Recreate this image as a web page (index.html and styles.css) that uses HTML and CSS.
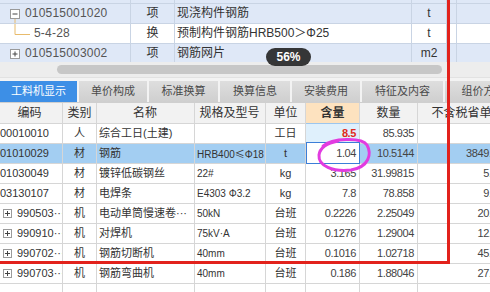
FILE: index.html
```html
<!DOCTYPE html>
<html>
<head>
<title>工料机显示</title>
<link rel="stylesheet" href="styles.css">
</head>
<body>
<div class="screen">

  <div class="upper">
    <div class="urow blue stub">
      <div class="uc code"></div><div class="uc kind"></div><div class="uc name"></div><div class="uc unit"></div><div class="uc gap"></div><div class="uc rest"></div>
    </div>
    <div class="urow blue">
      <div class="uc code">
        <svg class="tree" width="24" height="20" viewBox="0 0 24 20"><rect x="10.5" y="5.5" width="9" height="9" fill="#fff" stroke="#9a9a9a"/><line x1="12.5" y1="10" x2="17.5" y2="10" stroke="#444"/><line x1="15" y1="15" x2="15" y2="20" stroke="#e8bb6c"/></svg>
        <span class="ctext">010515001020</span>
      </div>
      <div class="uc kind">项</div>
      <div class="uc name">现浇构件钢筋</div>
      <div class="uc unit">t</div>
      <div class="uc gap"></div><div class="uc rest"></div>
    </div>
    <div class="urow">
      <div class="uc code">
        <svg class="tree sub" width="33" height="20" viewBox="0 0 33 20"><line x1="15" y1="0" x2="15" y2="10.5" stroke="#e8bb6c"/><line x1="15" y1="10.5" x2="30" y2="10.5" stroke="#e8bb6c"/></svg>
        <span class="ctext">5-4-28</span>
      </div>
      <div class="uc kind">换</div>
      <div class="uc name">预制构件钢筋HRB500＞Φ25</div>
      <div class="uc unit">t</div>
      <div class="uc gap"></div><div class="uc rest"></div>
    </div>
    <div class="urow blue">
      <div class="uc code">
        <svg class="tree" width="24" height="20" viewBox="0 0 24 20"><rect x="10.5" y="5.5" width="9" height="9" fill="#fff" stroke="#9a9a9a"/><line x1="12.5" y1="10" x2="17.5" y2="10" stroke="#444"/><line x1="15" y1="7.5" x2="15" y2="12.5" stroke="#444"/></svg>
        <span class="ctext">010515003002</span>
      </div>
      <div class="uc kind">项</div>
      <div class="uc name">钢筋网片</div>
      <div class="uc unit">m2</div>
      <div class="uc gap"></div><div class="uc rest"></div>
    </div>
  </div>

  <div class="hscroll"><div class="thumb"></div></div>

  <div class="tabs">
    <div class="tab active">工料机显示</div>
    <div class="tab w68">单价构成</div>
    <div class="tab w69">标准换算</div>
    <div class="tab w70">换算信息</div>
    <div class="tab w68">安装费用</div>
    <div class="tab w81">特征及内容</div>
    <div class="tab">组价方案</div>
  </div>

  <div class="grid">
    <div class="grow head">
      <div class="gc c-code">编码</div>
      <div class="gc c-type">类别</div>
      <div class="gc c-name center">名称</div>
      <div class="gc c-spec center">规格及型号</div>
      <div class="gc c-unit">单位</div>
      <div class="gc c-amt hl">含量</div>
      <div class="gc c-qty center">数量</div>
      <div class="gc c-price center">不含税省单价</div>
    </div>
    <div class="grow">
      <div class="gc c-code">00010010</div>
      <div class="gc c-type">人</div>
      <div class="gc c-name">综合工日(土建)</div>
      <div class="gc c-spec"></div>
      <div class="gc c-unit">工日</div>
      <div class="gc c-amt num focus red">8.5</div>
      <div class="gc c-qty num">85.935</div>
      <div class="gc c-price num"></div>
    </div>
    <div class="grow sel">
      <div class="gc c-code">01010029</div>
      <div class="gc c-type">材</div>
      <div class="gc c-name">钢筋</div>
      <div class="gc c-spec">HRB400<span class="sym">≤</span>Φ18</div>
      <div class="gc c-unit">t</div>
      <div class="gc c-amt num edit">1.04</div>
      <div class="gc c-qty num">10.5144</div>
      <div class="gc c-price num">3849.56</div>
    </div>
    <div class="grow">
      <div class="gc c-code">01030049</div>
      <div class="gc c-type">材</div>
      <div class="gc c-name">镀锌低碳钢丝</div>
      <div class="gc c-spec">22#</div>
      <div class="gc c-unit">kg</div>
      <div class="gc c-amt num">3.165</div>
      <div class="gc c-qty num">31.99815</div>
      <div class="gc c-price num">5.31</div>
    </div>
    <div class="grow">
      <div class="gc c-code">03130107</div>
      <div class="gc c-type">材</div>
      <div class="gc c-name">电焊条</div>
      <div class="gc c-spec">E4303 Φ3.2</div>
      <div class="gc c-unit">kg</div>
      <div class="gc c-amt num">7.8</div>
      <div class="gc c-qty num">78.858</div>
      <div class="gc c-price num">9.02</div>
    </div>
    <div class="grow">
      <div class="gc c-code"><span class="plus"></span>990503···</div>
      <div class="gc c-type">机</div>
      <div class="gc c-name">电动单筒慢速卷···</div>
      <div class="gc c-spec">50kN</div>
      <div class="gc c-unit">台班</div>
      <div class="gc c-amt num">0.2226</div>
      <div class="gc c-qty num">2.25049</div>
      <div class="gc c-price num">20.65</div>
    </div>
    <div class="grow">
      <div class="gc c-code"><span class="plus"></span>990910···</div>
      <div class="gc c-type">机</div>
      <div class="gc c-name">对焊机</div>
      <div class="gc c-spec">75kV·A</div>
      <div class="gc c-unit">台班</div>
      <div class="gc c-amt num">0.1276</div>
      <div class="gc c-qty num">1.29004</div>
      <div class="gc c-price num">12.30</div>
    </div>
    <div class="grow">
      <div class="gc c-code"><span class="plus"></span>990702···</div>
      <div class="gc c-type">机</div>
      <div class="gc c-name">钢筋切断机</div>
      <div class="gc c-spec">40mm</div>
      <div class="gc c-unit">台班</div>
      <div class="gc c-amt num">0.1016</div>
      <div class="gc c-qty num">1.02718</div>
      <div class="gc c-price num">45.21</div>
    </div>
    <div class="grow">
      <div class="gc c-code"><span class="plus"></span>990703···</div>
      <div class="gc c-type">机</div>
      <div class="gc c-name">钢筋弯曲机</div>
      <div class="gc c-spec">40mm</div>
      <div class="gc c-unit">台班</div>
      <div class="gc c-amt num">0.186</div>
      <div class="gc c-qty num">1.88046</div>
      <div class="gc c-price num">27.44</div>
    </div>
    <div class="grow">
      <div class="gc c-code"></div><div class="gc c-type"></div><div class="gc c-name"></div><div class="gc c-spec"></div><div class="gc c-unit"></div><div class="gc c-amt"></div><div class="gc c-qty"></div><div class="gc c-price"></div>
    </div>
  </div>

  <!-- overlays: zoom badge and the hand drawn marks -->
  <div class="zoom-badge">56%</div>
  <div class="red-frame"></div>
  <svg class="circle-mark" width="60" height="38" viewBox="0 0 60 38">
    <path d="M9 9 C18 1, 48 0, 53 8 C58 17, 55 30, 37 33 C19 35, 4 29, 5 18 C6 10, 14 6, 24 4" fill="none" stroke="#e23be0" stroke-width="3" stroke-linecap="round"/>
  </svg>

</div>
</body>
</html>
```

FILE: styles.css
```css
* {
  margin: 0;
  padding: 0;
  box-sizing: border-box;
}

body {
  width: 490px;
  height: 292px;
  overflow: hidden;
  background: #fff;
  font-family: "Liberation Sans", "Noto Sans CJK SC", sans-serif;
  font-size: 11px;
  color: #333;
}

.screen {
  position: relative;
  width: 490px;
  height: 292px;
  overflow: hidden;
}

/* upper tree grid */
.upper {
  height: 62px;
  overflow: hidden;
  font-size: 12px;
}
.urow {
  display: flex;
  height: 20px;
  border-bottom: 1px solid #c9d4e4;
  background: #fff;
}
.urow.blue {
  background: #dfe8f7;
}
.urow.stub {
  height: 4px;
}
.uc {
  flex: none;
  height: 100%;
  border-right: 1px solid #c9d4e4;
  line-height: 19px;
  white-space: nowrap;
  overflow: hidden;
}
.uc.code {
  width: 131px;
  display: flex;
  align-items: center;
  color: #555;
}
.tree {
  flex: none;
  display: block;
  margin-right: 1px;
}
.ctext {
  letter-spacing: 0.2px;
}
.uc.kind {
  width: 44px;
  text-align: center;
}
.uc.name {
  width: 237px;
  padding-left: 2px;
}
.uc.unit {
  width: 35px;
  text-align: center;
}
.uc.gap {
  width: 10px;
}
.uc.rest {
  flex: 1;
  border-right: 0;
}

/* horizontal scrollbar */
.hscroll {
  height: 16px;
  background: #ededed;
  padding: 3px 0 0 57px;
  border-bottom: 1px solid #e2e2e2;
}
.thumb {
  width: 385px;
  height: 9px;
  border-radius: 5px;
  background: #c7c7c7;
}

/* tab bar */
.tabs {
  display: flex;
  height: 25px;
  padding-top: 3px;
  background: #f3f3f3;
  border-bottom: 1px solid #cfcfcf;
}
.tab {
  flex: none;
  width: 77px;
  margin-right: 2px;
  line-height: 21px;
  text-align: center;
  color: #4a4a4a;
  background: linear-gradient(#dedede, #cfcfcf);
  white-space: nowrap;
}
.tab.active {
  background: #3d8fe6;
  color: #fff;
}
.tab.w68 { width: 68px; }
.tab.w69 { width: 69px; }
.tab.w70 { width: 70px; }
.tab.w81 { width: 81px; }

/* lower grid */
.grow {
  display: flex;
  height: 20px;
}
.grow.head {
  height: 21px;
  background: #f2f2f2;
  font-size: 12px;
}
.grow.sel {
  background: #a3cef2;
}
.gc {
  flex: none;
  height: 100%;
  border-right: 1px solid #d6d6d6;
  border-bottom: 1px solid #d6d6d6;
  line-height: 19px;
  white-space: nowrap;
  overflow: hidden;
  padding: 0 3px;
}
.head .gc {
  line-height: 20px;
  text-align: center;
}
.c-code { width: 63px; padding-left: 0; display: flex; align-items: center; }
.head .c-code { justify-content: center; }
.c-type { width: 34px; text-align: center; }
.c-name { width: 98px; padding-left: 2px; }
.c-spec { width: 71px; padding-left: 2px; font-size: 10px; }
.head .c-spec { font-size: 12px; }
.sym { font-family: "Noto Sans CJK SC", sans-serif; }
.c-unit { width: 40px; text-align: center; }
.c-amt { width: 54px; text-align: right; }
.c-qty { width: 58px; text-align: right; }
.c-price { width: 100px; text-align: right; padding-right: 14px; }
.head .c-price { padding-right: 3px; }
.center { text-align: center; }

.num {
  letter-spacing: -0.4px;
  color: #444;
}
.hl {
  background: #fde2bf;
  font-weight: bold;
  border-bottom: 1px solid #9cc6ee;
}
.focus {
  background: #dff0fc;
}
.red {
  color: #e02a20;
  font-weight: bold;
}
.edit {
  background: #fff;
  border: 1px solid #3b7ed8;
  margin-top: -2px;
  height: 22px;
  line-height: 20px;
}

.plus {
  flex: none;
  position: relative;
  width: 9px;
  height: 9px;
  margin: 0 5px 0 3px;
  border: 1px solid #9a9a9a;
  background: #fff;
}
.plus::before,
.plus::after {
  content: "";
  position: absolute;
  background: #444;
}
.plus::before {
  left: 1px;
  top: 3px;
  width: 5px;
  height: 1px;
}
.plus::after {
  left: 3px;
  top: 1px;
  width: 1px;
  height: 5px;
}

/* overlays */
.zoom-badge {
  position: absolute;
  left: 266px;
  top: 48px;
  width: 45px;
  height: 18px;
  border-radius: 9px;
  background: rgba(38, 38, 38, 0.92);
  color: #fff;
  font-size: 12px;
  font-weight: bold;
  line-height: 18px;
  text-align: center;
}
.red-frame {
  position: absolute;
  left: -10px;
  top: -10px;
  width: 460px;
  height: 274px;
  border: 3px solid #e2221c;
}
.circle-mark {
  position: absolute;
  left: 314px;
  top: 137px;
}
```
